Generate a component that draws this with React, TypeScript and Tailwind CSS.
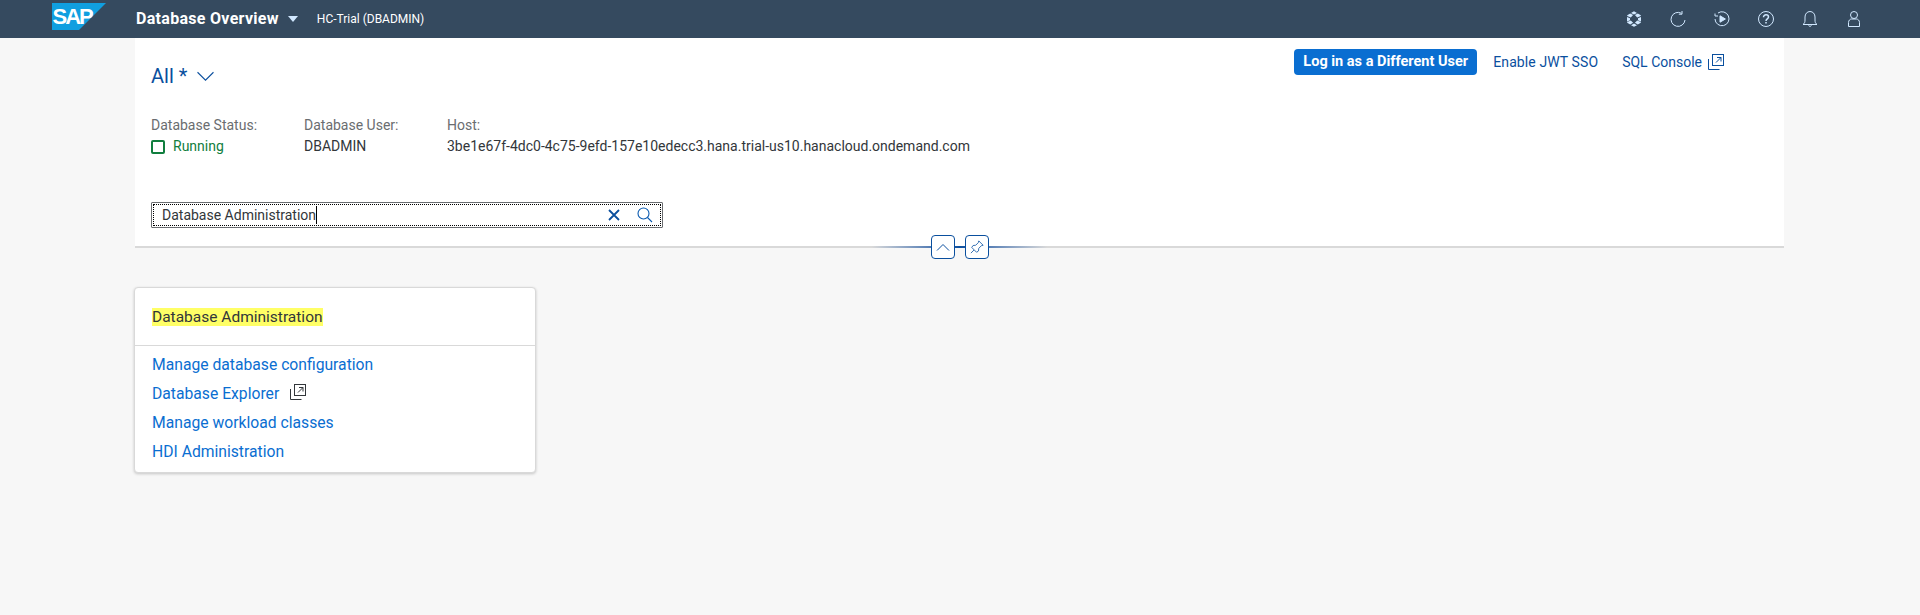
import React from "react";

const font = { fontFamily: 'Roboto, "Noto Sans", sans-serif' };

function ExternalIcon({ color, className }: { color: string; className?: string }) {
  return (
    <svg viewBox="0 0 16 16" width="16" height="16" fill="none" stroke={color} strokeWidth="1" className={className}>
      <rect x="4.5" y="0.5" width="11" height="11" />
      <path d="M0.5 5v10.5h11" />
      <path d="M8 8.5l5-5M9 3.5h4v4" />
    </svg>
  );
}

function ShellIcons() {
  const c = "#d1e8ff";
  return (
    <div className="flex items-center gap-[28px]">
      <svg viewBox="0 0 16 16" width="16" height="16" fill={c}>
        <path d="M8 .3l3 1.700-3 1.500-3-1.500zM4.200 2.500l2.900 1.500-2.300 2.500L1.200 5V4.200zM11.800 2.500l3 1.700V5l-3.600 1.500-2.300-2.500zM1 6l3 1.300v1.900L1 10.500zM15 6v4.500l-3-1.300V7.300zM4.800 9.500l2.300 2.300-2.900 1.700-3-1.700V11zM11.200 9.500l3.600 1.500v.8l-3 1.700-2.900-1.700zM8 12.500l3 1.700-3 1.500-3-1.500z" />
      </svg>
      <svg viewBox="0 0 16 16" width="16" height="16" fill="none" stroke={c} strokeWidth="1">
        <path d="M11.500 2.300A7 7 0 1 0 15 9" />
        <path d="M12 0v3.200H8.800" />
      </svg>
      <svg viewBox="0 0 16 16" width="16" height="16" fill="none" stroke={c} strokeWidth="1">
        <path d="M4 2A7 7 0 1 1 1 8" />
        <path d="M1 2.500v2.500h3" />
        <path d="M6 4.800v6.400l5.400-3.200z" fill={c} />
      </svg>
      <svg viewBox="0 0 16 16" width="16" height="16" fill="none" stroke={c} strokeWidth="1">
        <circle cx="8" cy="8" r="7.500" />
        <path d="M5.500 6.200C5.500 4.800 6.600 3.800 8 3.800s2.500 1 2.500 2.200c0 1.800-2.500 1.900-2.500 3.900" strokeWidth="1.500" />
        <path d="M8 11v1.500" strokeWidth="1.500" />
      </svg>
      <svg viewBox="0 0 16 16" width="16" height="16" fill="none" stroke={c} strokeWidth="1">
        <path d="M1 13.500h14c-1.600-1-2-2.400-2-4.500V6c0-3-2-5.500-5-5.500S3 3 3 6v3c0 2.100-.4 3.500-2 4.500z" />
        <path d="M6.500 14.500c.3 1 2.700 1 3 0" />
      </svg>
      <svg viewBox="0 0 16 16" width="16" height="16" fill="none" stroke={c} strokeWidth="1">
        <circle cx="8" cy="4" r="3.500" />
        <path d="M2.500 15.500v-4c0-2 1.500-3.500 3-3.500h5c1.500 0 3 1.500 3 3.500v4z" />
      </svg>
    </div>
  );
}

function Pin() {
  return (
    <svg viewBox="0 0 16 16" width="14" height="14" fill="none" stroke="#1b5ea8" strokeWidth="1">
      <path d="M10 1l5 5-2 .5-3 3-.3 3L7.500 14 2 8.500l1.500-2.200 3-.3 3-3z" />
      <path d="M4.500 11.500L1 15" />
    </svg>
  );
}

export default function App() {
  return (
    <div className="min-h-[615px] bg-[#f7f7f7] text-[14px]" style={font}>
      <header className="h-[38px] bg-[#354a5f] flex items-center justify-between pl-[52px] pr-[58px]">
        <div className="flex items-center">
          <svg viewBox="0 0 54 27" width="54" height="27" className="mt-[-5px]">
            <path d="M0 0h54L27 27H0z" fill="#109fe0" />
            <text x="0.500" y="21" fontSize="22" fontWeight="700" fill="#fff" fontFamily="Liberation Sans, sans-serif" letterSpacing="-2">SAP</text>
          </svg>
          <span className="ml-[30px] text-[16px] font-bold text-white tracking-[0.3px]">Database Overview</span>
          <span className="ml-[9px] w-0 h-0 border-l-[5px] border-r-[5px] border-t-[6px] border-l-transparent border-r-transparent border-t-[#d1e8ff]" />
          <span className="ml-[19px] text-[12px] text-white">HC-Trial (DBADMIN)</span>
        </div>
        <ShellIcons />
      </header>

      <section className="relative ml-[135px] w-[1649px] h-[210px] bg-white border-b-[2px] border-[#d9d9d9] px-[16px]">
        <div className="flex justify-between items-start">
          <div className="flex items-center mt-[25px] gap-[10px] text-[#0a4f9e]">
            <span className="text-[20px] leading-[26px]">All *</span>
            <svg viewBox="0 0 16 10" width="17" height="11" fill="none" stroke="#0a4f9e" strokeWidth="1"><path d="M0.500 1l7.500 7.500L15.500 1" /></svg>
          </div>
          <div className="flex items-center mt-[11px] mr-[44px]">
            <button className="h-[26px] w-[183px] rounded-[4px] bg-[#0a6ed1] text-white font-bold text-[14.5px]">Log in as a Different User</button>
            <span className="ml-[16px] text-[#0a4f9e] tracking-[0.1px]">Enable JWT SSO</span>
            <span className="ml-[24px] text-[#0a4f9e]">SQL Console</span>
            <ExternalIcon color="#0a4f9e" className="ml-[6px]" />
          </div>
        </div>
        <div className="flex mt-[26px] text-[#32363a]">
          <div className="w-[153px]">
            <div className="text-[#6a6d70]">Database Status:</div>
            <div className="flex items-center gap-[8px] text-[#107e3e]">
              <span className="w-[14px] h-[14px] border-[2px] border-[#107e3e] rounded-[2px]" />
              Running
            </div>
          </div>
          <div className="w-[143px]">
            <div className="text-[#6a6d70]">Database User:</div>
            <div>DBADMIN</div>
          </div>
          <div>
            <div className="text-[#6a6d70]">Host:</div>
            <div>3be1e67f-4dc0-4c75-9efd-157e10edecc3.hana.trial-us10.hanacloud.ondemand.com</div>
          </div>
        </div>
        <div className="mt-[45px] w-[512px] h-[26px] border border-[#6a6d70] rounded-[1px] p-[1px] bg-white">
          <div className="h-full border border-dotted border-black flex items-center pl-[8px] pr-[7px] text-[#32363a]">
            <span className="border-r border-black leading-[18px]">Database Administration</span>
            <svg viewBox="0 0 12 12" width="12" height="12" className="ml-auto" fill="none" stroke="#0a4f9e" strokeWidth="1.800"><path d="M1 1l10 10M11 1L1 11" /></svg>
            <svg viewBox="0 0 16 16" width="16" height="16" className="ml-[17px]" fill="none" stroke="#0a5ab0" strokeWidth="1.100"><circle cx="6.500" cy="6.500" r="5.500" /><path d="M10.500 10.500L15 15" /></svg>
          </div>
        </div>
        <div className="absolute left-[0px] right-0 bottom-[-2px] flex justify-center items-center h-[2px]">
          <div className="absolute left-[737px] w-[175px] h-[2px] bg-gradient-to-r from-[#d9d9d9] via-[#0a4f9e] to-[#d9d9d9]" />
          <div className="relative flex items-center gap-[10px]">
            <div className="w-[24px] h-[24px] rounded-[4px] border border-[#0a4f9e] bg-white flex items-center justify-center">
              <svg viewBox="0 0 14 8" width="14" height="8" fill="none" stroke="#0a4f9e" strokeWidth="1"><path d="M1 7.500l6-6 6 6" /></svg>
            </div>
            <div className="w-[24px] h-[24px] rounded-[4px] border border-[#0a4f9e] bg-white flex items-center justify-center"><Pin /></div>
          </div>
        </div>
      </section>

      <div className="ml-[134px] mt-[39px] w-[402px] h-[186px] bg-white rounded-[4px] border border-[#d9d9d9] shadow-[0_1px_3px_rgba(0,0,0,0.2)]">
        <div className="h-[58px] border-b border-[#d9d9d9] pl-[17px] pt-[18px] text-[15.5px]">
          <span className="inline-block bg-[#ffff66] text-[#32363a] leading-[18px]">Database Administration</span>
        </div>
        <div className="pl-[17px] text-[#0a6ed1] pt-[4px] text-[15.7px]">
          <div className="h-[29px] leading-[29px]">Manage database configuration</div>
          <div className="h-[29px] flex items-center">Database Explorer<ExternalIcon color="#32363a" className="ml-[11px] mt-[-3px]" /></div>
          <div className="h-[29px] leading-[29px]">Manage workload classes</div>
          <div className="h-[29px] leading-[29px]">HDI Administration</div>
        </div>
      </div>
    </div>
  );
}
